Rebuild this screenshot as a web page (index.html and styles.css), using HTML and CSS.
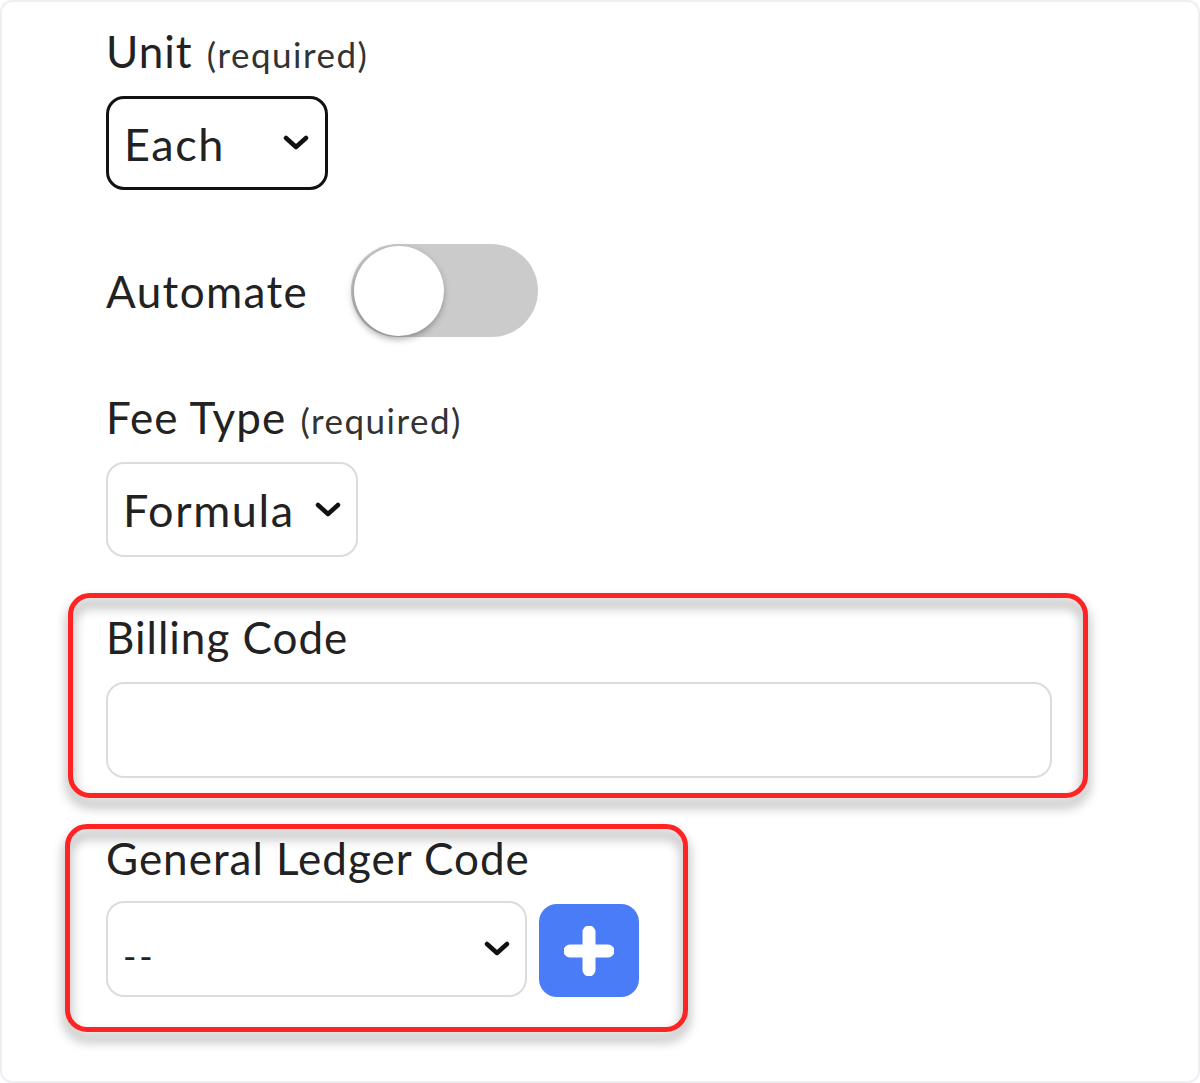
FILE: index.html
```html
<!DOCTYPE html>
<html lang="en">
<head>
<meta charset="utf-8">
<title>Fee form</title>
<link rel="stylesheet" href="styles.css">
</head>
<body>
<div class="frame">
  <form class="form">
    <div class="field">
      <div class="label">Unit <span class="req">(required)</span></div>
      <div class="select select-each focused">
        <span class="value">Each</span>
        <svg class="chev" width="26" height="16" viewBox="0 0 26 16"><path d="M3 3 L13 12 L23 3" fill="none" stroke="#111" stroke-width="4.5" stroke-linecap="round" stroke-linejoin="round"/></svg>
      </div>
    </div>

    <div class="field toggle-row">
      <span class="toggle-label">Automate</span>
      <span class="toggle"><span class="knob"></span></span>
    </div>

    <div class="field">
      <div class="label">Fee Type <span class="req">(required)</span></div>
      <div class="select select-formula">
        <span class="value">Formula</span>
        <svg class="chev" width="26" height="16" viewBox="0 0 26 16"><path d="M3 3 L13 12 L23 3" fill="none" stroke="#111" stroke-width="4.5" stroke-linecap="round" stroke-linejoin="round"/></svg>
      </div>
    </div>

    <div class="field highlighted">
      <div class="label">Billing Code</div>
      <div class="input"></div>
      <div class="highlight hl-billing"></div>
    </div>

    <div class="field highlighted gl">
      <div class="label">General Ledger Code</div>
      <div class="gl-row">
        <div class="select select-gl">
          <span class="value dash">--</span>
          <svg class="chev" width="26" height="16" viewBox="0 0 26 16"><path d="M3 3 L13 12 L23 3" fill="none" stroke="#111" stroke-width="4.5" stroke-linecap="round" stroke-linejoin="round"/></svg>
        </div>
        <button type="button" class="add-btn" aria-label="Add">
          <svg width="50" height="50" viewBox="0 0 50 50"><path d="M25 6 V44 M6 25 H44" fill="none" stroke="#fff" stroke-width="13" stroke-linecap="round"/></svg>
        </button>
      </div>
      <div class="highlight hl-gl"></div>
    </div>
  </form>
</div>
</body>
</html>
```

FILE: styles.css
```css
html, body {
  margin: 0;
  padding: 0;
  background: #fff;
}

body {
  font-family: Lato, "Open Sans", Arial, sans-serif;
  color: #222;
}

.frame {
  box-sizing: border-box;
  width: 1200px;
  height: 1083px;
  border: 2px solid #eeeef3;
  border-radius: 12px;
  padding: 23px 0 0 104px;
  background: #fff;
  overflow: hidden;
}

.form {
  display: flex;
  flex-direction: column;
}

.field {
  margin-bottom: 54px;
  position: relative;
}

.label {
  font-size: 44px;
  letter-spacing: 1px;
  line-height: 52px;
  height: 52px;
  margin-bottom: 19px;
  white-space: nowrap;
  color: #222;
}

.req {
  font-size: 35px;
  letter-spacing: 1.5px;
  color: #333;
  margin-left: 2px;
}

.select {
  box-sizing: border-box;
  height: 95px;
  border: 2px solid #dcdcdc;
  border-radius: 18px;
  display: flex;
  align-items: center;
  justify-content: space-between;
  padding: 0 15px 0 15px;
  background: #fff;
  font-size: 45px;
  letter-spacing: 1.6px;
  color: #222;
}

.select .value {
  line-height: 1;
  padding-top: 2px;
}

.select-each {
  width: 222px;
  height: 94px;
  border: 3px solid #111;
  padding-right: 16px;
}

.select-formula {
  width: 252px;
}

.select-gl {
  width: 421px;
  height: 96px;
}

.value.dash {
  font-size: 36px;
  padding-top: 14px;
  letter-spacing: 3px;
}

.chev {
  display: block;
  flex: none;
}

.toggle-row {
  display: flex;
  align-items: center;
  gap: 43px;
  height: 93px;
}

.toggle-label {
  font-size: 44px;
  letter-spacing: 1.4px;
  line-height: 52px;
}

.toggle {
  position: relative;
  width: 187px;
  height: 93px;
  border-radius: 47px;
  background: #cbcbcb;
  display: flex;
  align-items: center;
  padding-left: 3px;
  box-sizing: border-box;
}

.knob {
  width: 90px;
  height: 90px;
  border-radius: 50%;
  background: #fff;
  box-shadow: -1px 3px 7px rgba(0, 0, 0, 0.35);
}

.input {
  box-sizing: border-box;
  width: 946px;
  height: 96px;
  border: 2px solid #dcdcdc;
  border-radius: 18px;
  background: #fff;
}

.gl .label {
  margin-bottom: 16px;
}

.gl-row {
  display: flex;
  align-items: center;
  gap: 12px;
}

.add-btn {
  width: 100px;
  height: 93px;
  margin-top: 4px;
  border: none;
  border-radius: 18px;
  background: #4b7cf7;
  display: flex;
  align-items: center;
  justify-content: center;
  padding: 0;
}

.add-btn svg {
  display: block;
}

.highlight {
  position: absolute;
  border: 5px solid #ff2323;
  border-radius: 22px;
  filter: drop-shadow(0 8px 6px rgba(0, 0, 0, 0.45));
  pointer-events: none;
}

.hl-billing {
  left: -38px;
  top: -18px;
  width: 1020px;
  height: 205px;
  box-sizing: border-box;
}

.hl-gl {
  left: -41px;
  top: -8px;
  width: 623px;
  height: 208px;
  box-sizing: border-box;
}
```
